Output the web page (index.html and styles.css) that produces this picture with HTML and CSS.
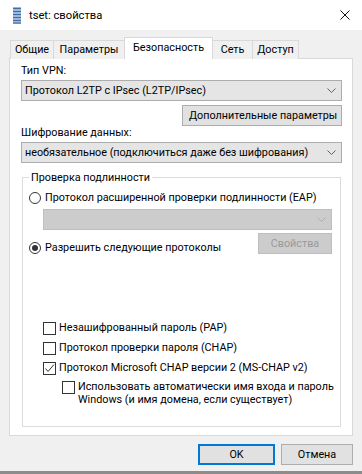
FILE: index.html
```html
<!DOCTYPE html>
<html lang="ru">
<head>
    <meta charset="UTF-8">
    <meta name="viewport" content="width=device-width, initial-scale=1.0">
    <title>tset: свойства</title>
    <link rel="stylesheet" href="styles.css">
</head>
<body>
    <div class="window">
        <div class="titlebar">
            <svg class="app-icon" width="8" height="17" viewBox="0 0 8 17">
                <rect x="0" y="0" width="8" height="17" fill="#9db8d6"/>
                <rect x="0" y="1" width="8" height="1" fill="#3f6fa6"/>
                <rect x="0" y="4" width="8" height="1" fill="#3f6fa6"/>
                <rect x="0" y="7" width="8" height="1" fill="#3f6fa6"/>
                <rect x="0" y="10" width="8" height="1" fill="#3f6fa6"/>
                <rect x="0" y="13" width="8" height="1" fill="#3f6fa6"/>
                <rect x="0" y="15" width="8" height="2" fill="#6d8fb8"/>
            </svg>
            <span class="title">tset: свойства</span>
            <svg class="close" width="10" height="10" viewBox="0 0 10 10">
                <path d="M0.5 0.5 L9.5 9.5 M9.5 0.5 L0.5 9.5" stroke="#111" stroke-width="1" fill="none"/>
            </svg>
        </div>

        <div class="content">
            <div class="tabs">
                <span class="tab tab-general">Общие</span>
                <span class="tab tab-options">Параметры</span>
                <span class="tab tab-security active">Безопасность</span>
                <span class="tab tab-network">Сеть</span>
                <span class="tab tab-sharing">Доступ</span>
            </div>

            <div class="panel">
                <div class="field-label">Тип VPN:</div>
                <div class="combo">
                    <span>Протокол L2TP с IPsec (L2TP/IPsec)</span>
                    <svg class="chevron" width="9" height="5" viewBox="0 0 9 5"><path d="M0.5 0.5 L4.5 4.5 L8.5 0.5" fill="none" stroke="#606060"/></svg>
                </div>
                <div class="right-row">
                    <button class="btn btn-wide">Дополнительные параметры</button>
                </div>
                <div class="field-label">Шифрование данных:</div>
                <div class="combo">
                    <span>необязательное (подключиться даже без шифрования)</span>
                    <svg class="chevron" width="9" height="5" viewBox="0 0 9 5"><path d="M0.5 0.5 L4.5 4.5 L8.5 0.5" fill="none" stroke="#606060"/></svg>
                </div>

                <fieldset class="group">
                    <legend>Проверка подлинности</legend>
                    <div class="radio-row">
                        <span class="radio"></span>
                        <span>Протокол расширенной проверки подлинности (EAP)</span>
                    </div>
                    <div class="combo disabled">
                        <span></span>
                        <svg class="chevron" width="9" height="5" viewBox="0 0 9 5"><path d="M0.5 0.5 L4.5 4.5 L8.5 0.5" fill="none" stroke="#b0b0b0"/></svg>
                    </div>
                    <div class="radio-line">
                        <div class="radio-row">
                            <span class="radio checked"></span>
                            <span>Разрешить следующие протоколы</span>
                        </div>
                        <button class="btn btn-props" disabled>Свойства</button>
                    </div>

                    <ul class="checks">
                        <li class="check-row">
                            <span class="checkbox"></span>
                            <span>Незашифрованный пароль (PAP)</span>
                        </li>
                        <li class="check-row">
                            <span class="checkbox"></span>
                            <span>Протокол проверки пароля (CHAP)</span>
                        </li>
                        <li class="check-row">
                            <span class="checkbox">
                                <svg width="11" height="11" viewBox="0 0 11 11"><path d="M1.5 5.5 L4 8.5 L10 1.5" fill="none" stroke="#333" stroke-width="1"/></svg>
                            </span>
                            <span>Протокол Microsoft CHAP версии 2 (MS-CHAP v2)</span>
                        </li>
                        <li class="check-row nested">
                            <span class="checkbox"></span>
                            <span class="wrap">Использовать автоматически имя входа и пароль<br>Windows (и имя домена, если существует)</span>
                        </li>
                    </ul>
                </fieldset>
            </div>

            <div class="footer">
                <button class="btn btn-ok">OK</button>
                <button class="btn btn-cancel">Отмена</button>
            </div>
        </div>
    </div>
</body>
</html>
```

FILE: styles.css
```css
* {
    box-sizing: border-box;
}

body {
    margin: 0;
    background-color: #f0f0f0;
    font-family: Roboto, "Liberation Sans", sans-serif;
    font-size: 10.8px;
    color: #000;
    white-space: nowrap;
}

.window {
    height: 474px;
    display: flex;
    flex-direction: column;
    border-bottom: 3px solid #8c8c8c;
}

/* title bar */

.titlebar {
    height: 30px;
    flex: none;
    background-color: #fff;
    display: flex;
    align-items: center;
    padding: 0 12px 0 13px;
}

.title {
    flex: 1;
    margin-left: 8px;
    font-size: 11.2px;
}

/* tabs + panel */

.content {
    flex: 1;
    display: flex;
    flex-direction: column;
    padding: 7px 9px 0 9px;
}

.tabs {
    display: flex;
    align-items: flex-end;
    height: 22px;
    padding-left: 2px;
    margin-bottom: -1px;
    position: relative;
    z-index: 1;
}

.tab {
    height: 19px;
    line-height: 17px;
    text-align: center;
    border: 1px solid #d9d9d9;
    border-bottom: none;
    margin-left: -1px;
    background-color: #f0f0f0;
}

.tab-general { width: 44px; }
.tab-options { width: 72px; }
.tab-security { width: 89px; }
.tab-network { width: 41px; }
.tab-sharing { width: 47px; }

.tab.active {
    height: 22px;
    line-height: 19px;
    background-color: #fff;
    position: relative;
    z-index: 2;
}

.panel {
    height: 378px;
    flex: none;
    display: flex;
    flex-direction: column;
    background-color: #fff;
    border: 1px solid #d9d9d9;
    padding: 0 10px 8px 11px;
}

.field-label {
    line-height: 13px;
    margin-top: 5px;
}

.combo {
    height: 21px;
    margin-top: 3px;
    display: flex;
    align-items: center;
    justify-content: space-between;
    padding: 0 5px 0 3px;
    background-color: #e5e5e5;
    border: 1px solid #adadad;
}

.combo.disabled {
    background-color: #cccccc;
    border-color: #bfbfbf;
    margin: 3px 0 0 14px;
}

.right-row {
    display: flex;
    justify-content: flex-end;
    margin-top: 4px;
}

.right-row + .field-label {
    margin-top: 0;
}

/* buttons */

.btn {
    height: 21px;
    font-family: inherit;
    font-size: inherit;
    color: #000;
    background-color: #e1e1e1;
    border: 1px solid #adadad;
    padding: 0 6px;
}

.btn-wide {
    width: 160px;
}

.btn-props {
    width: 74px;
    background-color: #cccccc;
    border-color: #bfbfbf;
    color: #9a9a9a;
}

.btn-ok {
    width: 77px;
    border-color: #0078d7;
    box-shadow: inset 0 0 0 1px #0078d7;
}

.btn-cancel {
    width: 72px;
}

.footer {
    display: flex;
    justify-content: flex-end;
    gap: 6px;
    margin-top: 8px;
}

/* group box */

.group {
    flex: 1;
    margin: 8px 1px 0 1px;
    padding: 0 8px 0 6px;
    border: 1px solid #dcdcdc;
    min-width: 0;
}

.group legend {
    line-height: 13px;
    padding: 0 2px;
}

.radio-row {
    display: flex;
    align-items: center;
    gap: 4px;
    line-height: 16px;
    margin-top: 6px;
}

.radio {
    width: 12px;
    height: 12px;
    flex: none;
    border: 1px solid #333;
    border-radius: 50%;
    display: flex;
    align-items: center;
    justify-content: center;
}

.radio.checked::after {
    content: "";
    width: 6px;
    height: 6px;
    border-radius: 50%;
    background-color: #333;
}

.radio-line {
    display: flex;
    justify-content: space-between;
    align-items: flex-start;
    margin-top: 3px;
}

.radio-line .radio-row {
    margin-top: 7px;
}

.checks {
    list-style: none;
    margin: 64px 0 0 14px;
    padding: 0;
}

.check-row {
    display: flex;
    align-items: center;
    gap: 3px;
    line-height: 16px;
    margin-top: 4px;
}

.check-row.nested {
    align-items: flex-start;
    margin-left: 19px;
}

.checkbox {
    width: 13px;
    height: 13px;
    flex: none;
    border: 1px solid #333;
    background-color: #fff;
    display: flex;
    align-items: center;
    justify-content: center;
}

.nested .checkbox {
    margin-top: 1px;
}

.wrap {
    line-height: 13px;
}
```
